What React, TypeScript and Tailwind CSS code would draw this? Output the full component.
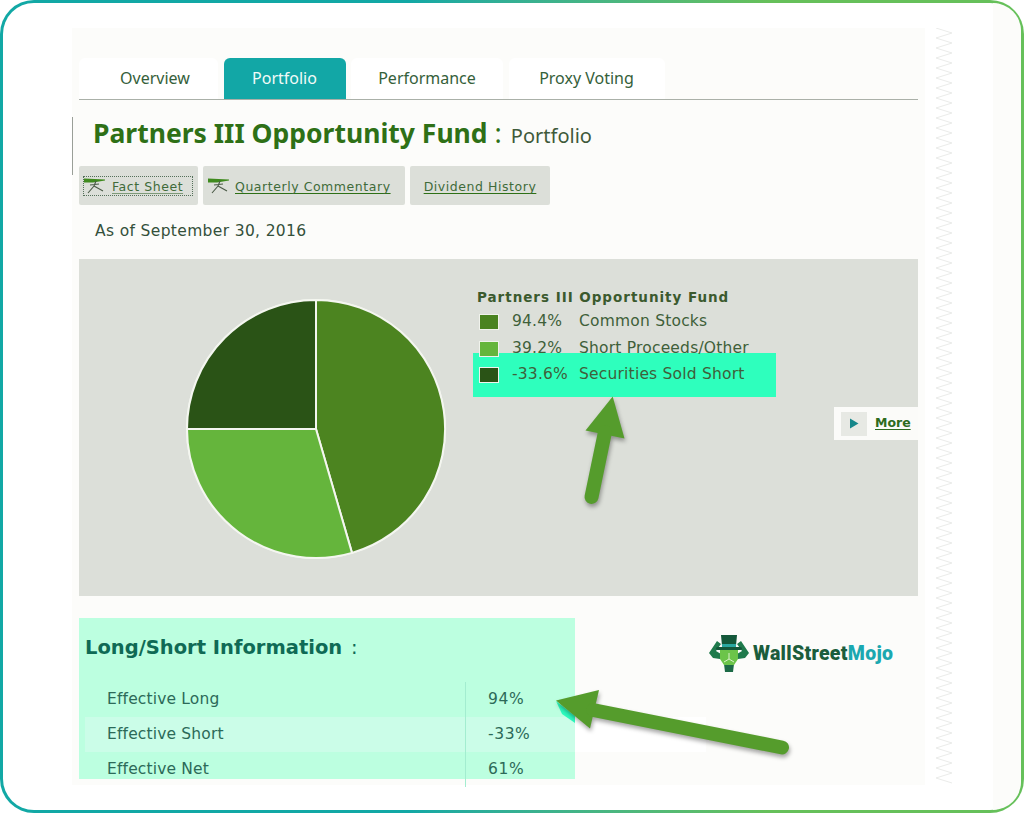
import React from 'react';

const tabs = [
  { label: 'Overview', width: 'w-[139px]', extra: 'pl-[13px]', active: false },
  { label: 'Portfolio', width: 'w-[122px]', extra: '', active: true },
  { label: 'Performance', width: 'w-[152px]', extra: '', active: false },
  { label: 'Proxy Voting', width: 'w-[156px]', extra: '', active: false },
];

const legend = [
  { value: '94.4%', label: 'Common Stocks', color: 'bg-[#4a8320]' },
  { value: '39.2%', label: 'Short Proceeds/Other', color: 'bg-[#65b53c]' },
];

// little green "pen" glyph in front of the document links
function DocIcon() {
  return (
    <svg width="22" height="16" viewBox="0 0 22 16" className="shrink-0">
      <path d="M0 0.5 L21 1.5 L21 2.5 L9 4.5 L0 4.5 Z" fill="#3f8a1e" />
      <path d="M12 3 L10 8 L4 15 M10 8 L19 13 M6 7 L15 6" stroke="#4a5a46" strokeWidth="1.1" fill="none" />
    </svg>
  );
}

function Zigzag() {
  const points: string[] = [];
  for (let i = 0; i < 152; i++) {
    points.push(`${i % 2 === 0 ? 1 : 17},${i * 5}`);
  }
  return (
    <svg width="18" height="757" viewBox="0 0 18 757" className="ml-[10px] mt-[25px] shrink-0">
      <polyline points={points.join(' ')} fill="none" stroke="#ebecea" strokeWidth="1" />
    </svg>
  );
}

function Logo() {
  return (
    <div className="flex items-center">
      <svg width="42" height="40" viewBox="0 0 42 40" className="shrink-0">
        <path d="M1 19 L9 7 L13 10 L8 17 L13 20 L12 25 L5 24 Z" fill="#1f7a4c" />
        <path d="M41 19 L33 7 L29 10 L34 17 L29 20 L30 25 L37 24 Z" fill="#1f7a4c" />
        <path d="M15 25 H27 L26 30 L25 38 H17 L16 30 Z" fill="#1c6a46" />
        <path d="M12 16 H30 V25 L26 31 H16 L12 25 Z" fill="#6cc44a" />
        <path d="M13 1 H29 L28 12 H14 Z" fill="#14583a" />
        <rect x="8" y="13" width="26" height="3" rx="1.5" fill="#14583a" />
        <rect x="14" y="10" width="14" height="3" fill="#2aa7a0" />
        <path d="M21 19 V25 M16 28 L21 25 L26 28" stroke="#d8f0c8" strokeWidth="1" fill="none" />
      </svg>
      <span className="ml-[3px] font-['Roboto',sans-serif] text-[19.5px] font-black leading-none tracking-[0.3px] text-[#1b5d3c]">
        WallStreet<span className="text-[#1ba8b0]">Mojo</span>
      </span>
    </div>
  );
}

export default function App() {
  return (
    <div className="h-[813px] w-[1024px] overflow-hidden bg-white">
      <div className="h-full rounded-[34px] bg-gradient-to-r from-[#12a8a5] from-40% to-[#66c05a] to-75% p-[3px]">
        <div className="relative flex h-full rounded-[31px] bg-white font-['DejaVu_Sans',sans-serif]">
          <div className="ml-[69px] mt-[25px] h-[757px] w-[853px] shrink-0 bg-[#fcfcfa] px-[7px] pt-[30px]">
            {/* tabs */}
            <div className="flex h-[42px] items-stretch gap-[5.5px] border-b border-[#aab0a8]">
              {tabs.map((tab) => (
                <div
                  key={tab.label}
                  className={`${tab.width} ${tab.extra} flex items-center justify-center rounded-t-[6px] pb-[2px] font-['Noto_Sans',sans-serif] text-[16px] ${
                    tab.active ? 'bg-[#12a7a6] text-[#f2fbf8]' : 'bg-white text-[#35603a]'
                  }`}
                >
                  {tab.label}
                </div>
              ))}
            </div>

            {/* title */}
            <div className="-ml-[7px] mb-[-9px] mt-[17px] flex h-[58px] items-start border-l border-[#9a9f98] pl-[20px]">
              <h1 className="font-['Noto_Sans',sans-serif] text-[26.5px] font-bold leading-[31px] text-[#2e7016]">
                Partners III Opportunity Fund
                <span className="ml-[7px] text-[27px] font-normal text-[#2e7016]">:</span>
                <span className="ml-[9px] text-[20px] font-normal text-[#3f5a3a]">Portfolio</span>
              </h1>
            </div>

            {/* doc links */}
            <div className="flex h-[39px] gap-[5px] text-[12.5px] tracking-[0.55px] text-[#3f6b3a]">
              <div className="flex w-[119px] items-center rounded-[2px] bg-[#dcdfd9] pl-[4px]">
                <div className="flex h-[20px] w-[110px] items-center gap-[6px] border border-dotted border-[#55705a]">
                  <DocIcon />
                  <span className="mt-[4px] underline decoration-[#7d9a78] underline-offset-2">Fact Sheet</span>
                </div>
              </div>
              <div className="flex w-[202px] items-center gap-[5px] rounded-[2px] bg-[#dcdfd9] pl-[5px] pr-2">
                <DocIcon />
                <span className="mt-[4px] underline decoration-[#2e7016] underline-offset-2">Quarterly Commentary</span>
              </div>
              <div className="flex w-[140px] items-center justify-center rounded-[2px] bg-[#dcdfd9]">
                <span className="mt-[4px] underline decoration-[#2e7016] underline-offset-2">Dividend History</span>
              </div>
            </div>

            <p className="ml-[16px] mt-[16px] text-[15.5px] leading-[20px] tracking-[0.35px] text-[#34503a]">
              As of September 30, 2016
            </p>

            {/* chart panel */}
            <div className="mt-[18px] flex h-[337px] items-start bg-[#dcdfd9]">
              <svg width="262" height="262" viewBox="0 0 262 262" className="ml-[106px] mt-[39px] shrink-0">
                <circle cx="131" cy="131" r="130" fill="#f2f4ee" />
                <path d="M131 131 L131 2 A129 129 0 0 1 167 254.9 Z" fill="#4c8420" stroke="#f4f6f0" strokeWidth="2" />
                <path d="M131 131 L167 254.9 A129 129 0 0 1 2 131 Z" fill="#65b53c" stroke="#f4f6f0" strokeWidth="2" />
                <path d="M131 131 L2 131 A129 129 0 0 1 131 2 Z" fill="#2a5316" stroke="#f4f6f0" strokeWidth="2" />
              </svg>
              <div className="ml-[30px] mt-[29px] w-[300px] text-[15.5px] tracking-[0.2px] text-[#3f5f3a]">
                <div className="h-[18px] text-[13.5px] font-bold leading-[18px] tracking-[0.97px] text-[#3b5a2e]">
                  Partners III Opportunity Fund
                </div>
                {legend.map((row, i) => (
                  <div key={row.label} className={`flex h-[27px] items-center ${i === 0 ? 'mt-[2px]' : ''}`}>
                    <span className={`ml-[2px] h-[16px] w-[20px] border border-[#f0f2ec] ${row.color}`} />
                    <span className="ml-[13px] w-[67px]">{row.value}</span>
                    <span>{row.label}</span>
                  </div>
                ))}
                <div className="-ml-[4px] -mt-[9px] flex h-[44px] w-[303px] items-center bg-[#2effbd] pl-[6px]">
                  <span className="h-[16px] w-[20px] border border-[#f0f2ec] bg-[#2a5316]" />
                  <span className="ml-[13px] w-[67px]">-33.6%</span>
                  <span>Securities Sold Short</span>
                </div>
              </div>
              <div className="ml-auto mt-[148px] flex h-[33px] w-[84px] items-center bg-[#fbfbf9] pl-[7px]">
                <div className="flex h-[24px] w-[26px] items-center justify-center bg-[#e7e9e4]">
                  <svg width="10" height="11" viewBox="0 0 10 11">
                    <path d="M1 0.5 L9.5 5.5 L1 10.5 Z" fill="#16878a" />
                  </svg>
                </div>
                <span className="ml-[8px] text-[12.5px] font-bold text-[#2e6b1e] underline underline-offset-2">More</span>
              </div>
            </div>

            {/* long / short */}
            <div className="mt-[22px] flex items-start">
              <div className="h-[161px] w-[496px] shrink-0 bg-[#bcffe0]">
                <h2 className="h-[64px] pl-[6px] pt-[17px] text-[19.5px] font-bold leading-[26px] text-[#0f6a55]">
                  Long/Short Information <span className="ml-[2px] font-normal">:</span>
                </h2>
                <div className="text-[15.5px] tracking-[0.15px] text-[#2c6a58]">
                  <div className="flex h-[35px] items-center pl-[28px]">
                    <span className="w-[358px]">Effective Long</span>
                    <span className="flex h-full items-center border-l border-[#a3edd0] pl-[22px] tracking-[0.6px]">94%</span>
                  </div>
                  <div className="ml-[6px] flex h-[35px] w-[621px] items-center bg-[linear-gradient(90deg,#cbfde8_0,#cbfde8_490px,#ffffff_490px)] pl-[22px]">
                    <span className="w-[358px]">Effective Short</span>
                    <span className="flex h-full items-center border-l border-[#a3edd0] pl-[22px] tracking-[0.6px]">-33%</span>
                  </div>
                  <div className="flex h-[35px] items-center pl-[28px]">
                    <span className="w-[358px]">Effective Net</span>
                    <span className="flex h-full items-center border-l border-[#a3edd0] pl-[22px] tracking-[0.6px]">61%</span>
                  </div>
                </div>
              </div>
              <div className="ml-[133px] mt-[16px]">
                <Logo />
              </div>
            </div>
          </div>

          <Zigzag />
          <div className="ml-auto h-full w-[28px] rounded-r-[31px] bg-[#fcfcfa]" />
        </div>
      </div>

      {/* annotation arrows over the screenshot */}
      <svg width="1024" height="813" viewBox="0 0 1024 813" className="pointer-events-none absolute left-0 top-0">
        <polygon points="556,701 575,716 575,723 562,714" fill="#2dfcbf" />
        <g className="drop-shadow-[1px_3px_2px_rgba(0,0,0,0.35)]" fill="#559c2c">
          <polygon points="612.7,396.5 585.5,430.5 624.5,438.5" />
          <line x1="605" y1="432" x2="591.5" y2="497" stroke="#559c2c" strokeWidth="14" strokeLinecap="round" />
          <polygon points="556,700.5 599,690 590,728.5" />
          <line x1="593" y1="710" x2="782" y2="747.5" stroke="#559c2c" strokeWidth="14" strokeLinecap="round" />
        </g>
      </svg>
    </div>
  );
}
